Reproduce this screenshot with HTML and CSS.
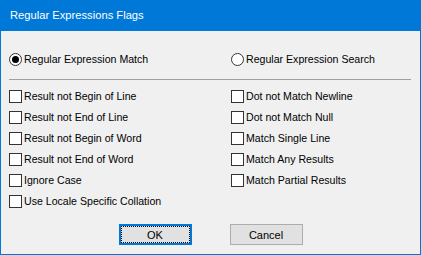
FILE: index.html
```html
<!DOCTYPE html>
<html lang="en-US">
    <head>
        <meta charset="utf-8">
        <title>Regular Expressions Flags</title>
        <meta name="viewport" content="width=device-width,initial-scale=1">
        <link rel="stylesheet" href="styles.css">
    </head>
    <body>
        <div class="window">
            <div class="title-bar">Regular Expressions Flags</div>

            <div class="content">
                <div class="mode-row">
                    <label class="option">
                        <span class="radio checked"></span>
                        Regular Expression Match
                    </label>
                    <label class="option">
                        <span class="radio"></span>
                        Regular Expression Search
                    </label>
                </div>

                <div class="separator"></div>

                <div class="flags">
                    <div class="flag-col">
                        <label class="option flag"><span class="check"></span>Result not Begin of Line</label>
                        <label class="option flag"><span class="check"></span>Result not End of Line</label>
                        <label class="option flag"><span class="check"></span>Result not Begin of Word</label>
                        <label class="option flag"><span class="check"></span>Result not End of Word</label>
                        <label class="option flag"><span class="check"></span>Ignore Case</label>
                        <label class="option flag"><span class="check"></span>Use Locale Specific Collation</label>
                    </div>
                    <div class="flag-col">
                        <label class="option flag"><span class="check"></span>Dot not Match Newline</label>
                        <label class="option flag"><span class="check"></span>Dot not Match Null</label>
                        <label class="option flag"><span class="check"></span>Match Single Line</label>
                        <label class="option flag"><span class="check"></span>Match Any Results</label>
                        <label class="option flag"><span class="check"></span>Match Partial Results</label>
                    </div>
                </div>

                <div class="buttons">
                    <button class="btn default"><span class="focus">OK</span></button>
                    <button class="btn">Cancel</button>
                </div>
            </div>
        </div>
    </body>
</html>
```

FILE: styles.css
```css
html, body {
    margin: 0;
    padding: 0;
}

body {
    font-family: "Liberation Sans", Arial, sans-serif;
    font-size: 10.6px;
    color: #000;
    background: #f0f0f0;
}

.window {
    width: 421px;
    height: 255px;
    box-sizing: border-box;
    border: 1px solid #0078d7;
    border-top: none;
    background: #f0f0f0;
    display: flex;
    flex-direction: column;
}

.title-bar {
    height: 31px;
    margin: 0 -1px;
    padding-left: 10px;
    background: #0078d7;
    color: #fff;
    font-size: 11.2px;
    line-height: 30px;
    flex: none;
}

.content {
    padding: 0 9px 0 8px;
    display: flex;
    flex-direction: column;
}

.mode-row {
    display: grid;
    grid-template-columns: 222px 1fr;
    margin-top: 22px;
    height: 13px;
}

.option {
    display: flex;
    align-items: center;
    gap: 2px;
    white-space: nowrap;
    line-height: 13px;
}

.radio {
    width: 13px;
    height: 13px;
    box-sizing: border-box;
    border: 1px solid #333;
    border-radius: 50%;
    background: #fff;
    display: flex;
    align-items: center;
    justify-content: center;
    flex: none;
}
.radio.checked::after {
    content: "";
    width: 7px;
    height: 7px;
    border-radius: 50%;
    background: #000;
}

.separator {
    margin-top: 13px;
    height: 1px;
    background: #a0a0a0;
}

.flags {
    display: grid;
    grid-template-columns: 222px 1fr;
    margin-top: 6px;
}

.flag-col {
    display: flex;
    flex-direction: column;
}

.flag {
    height: 21px;
}

.check {
    width: 13px;
    height: 13px;
    box-sizing: border-box;
    border: 1px solid #333;
    background: #fff;
    flex: none;
}

.buttons {
    display: flex;
    justify-content: center;
    gap: 38px;
    margin-top: 12px;
    padding-left: 1px;
}

.btn {
    width: 73px;
    height: 21px;
    box-sizing: border-box;
    border: 1px solid #adadad;
    background: #e1e1e1;
    font-family: inherit;
    font-size: 11px;
    color: #000;
    padding: 0;
}

.btn.default {
    border: 2px solid #0078d7;
    padding: 0;
}
.btn.default .focus {
    display: flex;
    align-items: center;
    justify-content: center;
    height: 100%;
    box-sizing: border-box;
    border: 1px dotted #000;
}
```
